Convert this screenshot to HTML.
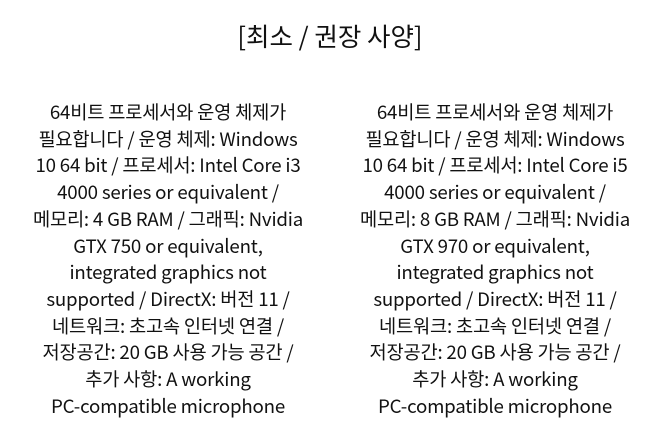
<!DOCTYPE html>
<html><head><meta charset="utf-8"><style>
html,body{margin:0;padding:0;background:#fff;}
body{width:660px;height:441px;position:relative;overflow:hidden;font-family:"Noto Sans CJK KR","Liberation Sans",sans-serif;color:#111;}
.t{position:absolute;top:18px;left:0;width:660px;text-align:center;font-size:25.5px;line-height:36px;}
.c{position:absolute;top:99px;width:330px;text-align:center;font-size:18.7px;line-height:26.7px;letter-spacing:-0.2px;}
</style></head><body>
<div class="t">[최소 / 권장 사양]</div>
<div class="c" style="left:3px">64비트 프로세서와 운영 체제가<br>필요합니다 / 운영 체제: Windows<br>10 64 bit / 프로세서: Intel Core i3<br>4000 series or equivalent /<br>메모리: 4 GB RAM / 그래픽: Nvidia<br>GTX 750 or equivalent,<br>integrated graphics not<br>supported / DirectX: 버전 11 /<br>네트워크: 초고속 인터넷 연결 /<br>저장공간: 20 GB 사용 가능 공간 /<br>추가 사항: A working<br>PC-compatible microphone</div>
<div class="c" style="left:330px">64비트 프로세서와 운영 체제가<br>필요합니다 / 운영 체제: Windows<br>10 64 bit / 프로세서: Intel Core i5<br>4000 series or equivalent /<br>메모리: 8 GB RAM / 그래픽: Nvidia<br>GTX 970 or equivalent,<br>integrated graphics not<br>supported / DirectX: 버전 11 /<br>네트워크: 초고속 인터넷 연결 /<br>저장공간: 20 GB 사용 가능 공간 /<br>추가 사항: A working<br>PC-compatible microphone</div>
</body></html>
